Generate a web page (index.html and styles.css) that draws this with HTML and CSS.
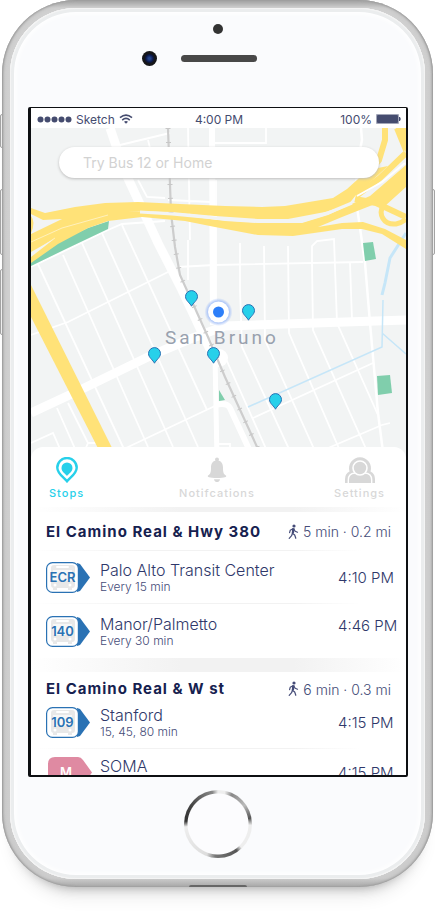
FILE: index.html
```html
<!DOCTYPE html>
<html lang="en">
<head>
<meta charset="utf-8">
<meta name="viewport" content="width=device-width, initial-scale=1">
<title>Stops near San Bruno</title>
<link rel="stylesheet" href="styles.css">
</head>
<body>
<svg class="defs" aria-hidden="true">
  <defs>
    <symbol id="pin" viewBox="0 0 14 17"><path d="M7 16.200C5.600 13.200 1 10.400 1 6.600A6 6 0 0 1 13 6.600C13 10.400 8.400 13.200 7 16.200Z" fill="#27d0ea" stroke="#2a72b4"/></symbol>
    <symbol id="walk" viewBox="0 0 12 16"><circle cx="7" cy="2" r="1.600" fill="currentColor"/><path d="M6.200 5 5.400 9.200 7.700 11 8.800 14.300M5.400 9.200 4.600 11.700 2.200 14.300M6 4.800 3.200 6.300 2.600 8.700M6.800 5 8.200 7.300 10.500 8.200" fill="none" stroke="currentColor" stroke-width="1.200" stroke-linecap="round" stroke-linejoin="round"/><path d="M5.200 4.300 7.600 4.300 7 9.300 4.800 9.300Z" fill="currentColor"/></symbol>
    <symbol id="bus" viewBox="0 0 44 31">
      <path d="M31 1 34 2 44 15.500 34 29 31 30Z" fill="#2a72b4"/>
      <rect x=".6" y=".6" width="31.800" height="29.800" rx="6" fill="#fff" stroke="#2a72b4" stroke-width="1.200"/>
      <rect x="5" y="3" width="24" height="23" rx="3" fill="#e8e8e8"/>
      <rect x="7" y="26" width="4" height="2" fill="#e8e8e8"/><rect x="22" y="26" width="4" height="2" fill="#e8e8e8"/>
      <rect x="10" y="4" width="13" height="2" rx="1" fill="#fff"/><rect x="7" y="8" width="19" height="11" fill="#f7f7f7"/>
      <circle cx="9" cy="23" r="1.500" fill="#fff"/><circle cx="24" cy="23" r="1.500" fill="#fff"/>
    </symbol>
    <radialGradient id="halo"><stop offset=".7" stop-color="#9dbbf8"/><stop offset="1" stop-color="#9dbbf8" stop-opacity="0"/></radialGradient>
  </defs>
</svg>

<i class="key key-mute"></i><i class="key key-up"></i><i class="key key-down"></i><i class="key key-power"></i>

<div class="phone">
  <div class="face">
    <div class="earpiece">
      <span class="sensor"></span>
      <div class="speaker-row"><span class="camera"></span><span class="speaker"></span></div>
    </div>

    <main class="screen">
      <header class="status">
        <div class="carrier">
          <svg width="35" height="7" viewBox="0 0 35 7" fill="#454c6f"><circle cx="3.500" cy="3.500" r="3"/><circle cx="10.500" cy="3.500" r="3"/><circle cx="17.500" cy="3.500" r="3"/><circle cx="24.500" cy="3.500" r="3"/><circle cx="31.500" cy="3.500" r="3"/></svg>
          <span>Sketch</span>
          <svg width="14" height="10" viewBox="0 0 14 10" fill="none" stroke="#454c6f" stroke-width="1.600"><path d="M1 3.700Q7-1.600 13 3.700M3.200 6.100Q7 2.800 10.800 6.100"/><path d="M5 7.700Q7 6.100 9 7.700L7 9.800Z" fill="#454c6f" stroke="none"/></svg>
        </div>
        <span>4:00 PM</span>
        <div class="power">
          <span>100%</span>
          <svg width="25" height="10" viewBox="0 0 25 10"><rect width="23" height="10" rx="1" fill="#a2a6b8"/><rect x="1" y="1" width="21" height="8" rx="1" fill="#454c6f"/><path d="M23.500 3Q25 5 23.500 7Z" fill="#454c6f" stroke="#454c6f"/></svg>
        </div>
      </header>

      <section class="map">
        <svg class="map-art" viewBox="31 128 375 332" preserveAspectRatio="xMidYMid slice" role="img" aria-label="Map of San Bruno">
          <rect x="31" y="128" width="375" height="332" fill="#f2f4f4"/>
          <g fill="none" stroke="#fff" stroke-width="1.800">
            <path d="M37 262 123 447 129 460M63 255 148 447M82 243 173 447M102 233 198 447M122 225 207 410"/>
            <path d="M31 267 108 230 122 224 165 221M172 270 68 322 31 335M128 447 217 405M100 460 128 447"/>
            <path d="M57 408 80 460M68 403 88 443 84 452M31 443 53 433 64 458M88 443H98"/>
            <path d="M188 128 190 240M188 280V240M168 200 212 202M120 145 170 133M148 140 150 148M138 180 147 197 165 198M212 143H266V128M216 180V330"/>
            <path d="M240 243V290L242 347 294 460M264 246 265 340 319 460M288 246 289 333 344 460M312 263 313 330 371 460M312 263V246L317 241 334 239 337 323 378 415M350 263 352 320"/>
            <path d="M178 267 214 265 363 262M253 418 373 363M300 460 382 425 390 423M222 350 271 460M217 444H230V450"/>
            <path d="M361 128 362 140 357 165 356 200 365 263 370 323 378 413 384 460" stroke-width="2.500"/>
            <path d="M212 128 213 325" stroke-width="6"/>
            <path d="M110 128 125 172 158 243 182 290 215 360" stroke-width="9"/>
            <path d="M215 355 217 460" stroke-width="5"/>
            <path d="M31 413 78 391 152 355 190 339 225 326 406 320" stroke-width="9"/>
            <path d="M215 405Q227 402 230 408L254 460" stroke-width="6"/>
          </g>
          <circle cx="219" cy="358" r="9" fill="#fff"/>
          <g fill="#80ceac"><path d="M109 221 108 229 68 248 31 266V261L58 242 88 228Z"/><path d="M363 243 373 242 376 259 365 261Z"/><path d="M377 376 390 375 392 393 378 395Z"/><path d="M219 390 225 400 219 401Z"/></g>
          <g fill="none" stroke="#c6e6f8" stroke-width="1.500"><path d="M248 407 382 347 383 300M382 333 406 354"/><path d="M406 233 390 258 385 283 382 295" stroke-width="3"/></g>
          <path d="M168 128 171 213 175 247 180 275 208 337 225 377 263 460" fill="none" stroke="#cdcdcd" stroke-width="2.200"/>
          <path d="M168 128 171 213 175 247 180 275 208 337 225 377 263 460" fill="none" stroke="#c7c7c7" stroke-width="5" stroke-dasharray="1 13"/>
          <g fill="#ffe278">
            <path d="M31 285V317L104 460H118Z"/>
            <path d="M31 208 45 213 75 207 105 203 138 202 180 204 225 206 262 207 285 206 333 198 347 189 368 170 388 166 356 195 348 205 325 212 288 219 258 219 215 216 172 212 138 211 112 213 124 212 142 211 180 215 225 221 258 223 302 223 328 215 356 202 370 196 406 165V187L385 206 375 204 342 217 318 227 342 223 363 222 385 229 406 240V249L382 234 362 229 342 229 293 236 258 235 215 227 185 221 142 217 108 221 88 228 58 244 31 263V234L62 219 43 220 31 214Z"/>
            <path d="M31 216Q36 222 31 233Z"/>
          </g>
          <g fill="none" stroke="#ffe278" stroke-width="6"><path d="M385 128V140L379 160 366 176"/><path d="M397 128 406 150"/><path d="M356 196 380 178 406 153"/><path d="M355 199 376 203 406 217"/><path d="M384 203C377 215 384 225 396 224Q402 223 406 219" stroke-width="5"/></g>
          <path d="M396 128H406V153Z" fill="#ffe278"/>
          <path d="M31 242 62 228 108 215M31 254 55 238" fill="none" stroke="#fff1bd" stroke-width="1"/>
          <path d="M31 252 54 239 31 257Z" fill="#f2f4f4"/>
          <path d="M140 212 172 214 225 219 258 221 302 221 328 213 352 203" fill="none" stroke="#f2f4f4" stroke-width="3"/>
          <path d="M357 196 382 182 405 163" fill="none" stroke="#fff" stroke-width="2"/>
          <text x="165" y="344" class="place">San Bruno</text>
          <circle cx="218.500" cy="312" r="14" fill="url(#halo)"/><circle cx="218.500" cy="312" r="10.500" fill="#fff"/><circle cx="218.500" cy="312" r="5.500" fill="#2d7ff9"/>
          <use href="#pin" x="184.500" y="290" width="14" height="17"/>
          <use href="#pin" x="241.500" y="304" width="14" height="17"/>
          <use href="#pin" x="147.500" y="347" width="14" height="17"/>
          <use href="#pin" x="206.500" y="347" width="14" height="17"/>
          <use href="#pin" x="268.500" y="393" width="14" height="17"/>
        </svg>
        <input class="search" type="search" aria-label="Search" placeholder="Try Bus 12 or Home">
      </section>

      <section class="sheet">
        <nav class="tabs">
          <a class="tab active" href="#stops">
            <svg width="22" height="26" viewBox="0 0 22 26"><path d="M11 24.300C8 20.500 1.300 16.700 1.300 10.700A9.700 9.700 0 0 1 20.700 10.700C20.700 16.700 14 20.500 11 24.300Z" fill="none" stroke="#27d0ea" stroke-width="2.400"/><path d="M11 19C9 16.500 5.500 14.500 5.500 11A5.500 5.500 0 0 1 16.500 11C16.500 14.500 13 16.500 11 19Z" fill="#27d0ea"/></svg>
            <span>Stops</span>
          </a>
          <a class="tab" href="#notifications">
            <svg width="22" height="26" viewBox="0 0 22 26" fill="#d8d8d8"><circle cx="11" cy="2.500" r="2"/><path d="M11 3.500C15.500 3.500 17 7 17 10.500 17 15.500 17.500 17 20 18.500 21 20 19 21 11 21S1 20 2 18.500C4.500 17 5 15.500 5 10.500 5 7 6.500 3.500 11 3.500Z"/><path d="M8 22.200H14Q13.500 25 11 25T8 22.200Z"/></svg>
            <span>Notifcations</span>
          </a>
          <a class="tab" href="#settings">
            <svg width="30" height="26" viewBox="0 0 30 26"><path d="M0 26V22Q0 16.500 4.500 14.500A11 11 0 1 1 25.500 14.500Q30 16.500 30 22V26Z" fill="#d8d8d8"/><path d="M3.300 27V23Q3.300 16.500 10 16H20Q26.700 16.500 26.700 23V27" fill="#d8d8d8" stroke="#fff" stroke-width="1.400"/><circle cx="15" cy="11" r="7" fill="#d8d8d8" stroke="#fff" stroke-width="1.600"/></svg>
            <span>Settings</span>
          </a>
        </nav>

        <section class="stop">
          <header class="stop-head">
            <h2>El Camino Real &amp; Hwy 380</h2>
            <p><svg width="12" height="16"><use href="#walk"/></svg>5 min · 0.2 mi</p>
          </header>
          <ul>
            <li class="route">
              <span class="badge"><svg width="44" height="31"><use href="#bus"/></svg><b>ECR</b></span>
              <div><h3>Palo Alto Transit Center</h3><p>Every 15 min</p></div>
              <time>4:10 PM</time>
            </li>
            <li class="route">
              <span class="badge"><svg width="44" height="31"><use href="#bus"/></svg><b>140</b></span>
              <div><h3>Manor/Palmetto</h3><p>Every 30 min</p></div>
              <time class="raised">4:46 PM</time>
            </li>
          </ul>
        </section>

        <section class="stop compact">
          <header class="stop-head">
            <h2>El Camino Real &amp; W st</h2>
            <p><svg width="12" height="16"><use href="#walk"/></svg>6 min · 0.3 mi</p>
          </header>
          <ul>
            <li class="route">
              <span class="badge"><svg width="44" height="31"><use href="#bus"/></svg><b>109</b></span>
              <div><h3>Stanford</h3><p>15, 45, 80 min</p></div>
              <time>4:15 PM</time>
            </li>
            <li class="route">
              <span class="badge metro"><svg width="44" height="31" viewBox="0 0 44 31"><path d="M7 0H30Q33 0 35 3L44 15.500 35 28Q33 31 30 31H7Q0 31 0 24V7Q0 0 7 0Z" fill="#df8aa2"/></svg><b>M</b></span>
              <div><h3>SOMA</h3></div>
              <time>4:15 PM</time>
            </li>
          </ul>
        </section>
      </section>
    </main>

    <div class="chin"><button class="home" aria-label="Home"></button></div>
  </div>
  <span class="port"></span>
</div>
</body>
</html>
```

FILE: styles.css
```css
* { box-sizing: border-box; }

body {
  margin: 0;
  position: relative;
  height: 100vh;
  overflow: hidden;
  background: #fff;
  color: #16214f;
  font-family: Inter, "Liberation Sans", sans-serif;
}

h2, h3, p, ul { margin: 0; padding: 0; }
ul { list-style: none; }
svg { display: block; flex: none; }
.defs { position: absolute; width: 0; height: 0; }

/* Device body */
.phone {
  position: relative;
  display: flex;
  height: calc(100vh - 37px);
  margin: 0 2px;
  padding: 8px;
  border-radius: 74px;
  background: linear-gradient(#a0a0a0, #d0d0d0 8px, #cdcdcd 99%, #aaa);
  box-shadow: inset 1px 0 2px #999, inset -1px 0 2px #999, inset 0 0 5px #aaa, 0 14px 12px -14px #999, 0 20px 16px -8px #f0f0f0;
}

.face {
  flex: 1;
  display: flex;
  flex-direction: column;
  min-width: 0;
  padding: 0 17px 0 18px;
  border-radius: 66px;
  background: #fafbfd;
  box-shadow: inset 0 0 0 1px #f4f4f4, inset 0 0 0 4px #ebedee, inset 0 0 5px 6px #fff;
}

.key {
  position: absolute;
  left: 0;
  width: 4px;
  border: 1px solid #999;
  border-radius: 2px;
  background: #eee;
}
.key-mute { top: 114px; height: 34px; }
.key-up { top: 189px; height: 66px; }
.key-down { top: 269px; height: 66px; }
.key-power { top: 189px; right: 0; left: auto; height: 66px; }

.earpiece {
  display: flex;
  flex: none;
  flex-direction: column;
  align-items: center;
  gap: 17px;
  height: 99px;
  padding-top: 16px;
}
.sensor { width: 10px; height: 10px; border-radius: 50%; background: #333; }
.speaker-row { display: flex; align-items: center; gap: 24px; padding-right: 38px; }
.camera { width: 15px; height: 15px; border-radius: 50%; background: radial-gradient(#24448b 10%, #0b1848 35%, #151619 48%); }
.speaker { width: 76px; height: 7px; border-radius: 4px; background: #484848; }

.chin { flex: none; display: flex; justify-content: center; height: 102px; padding-top: 13px; }
.home {
  width: 68px;
  height: 68px;
  border: 0;
  border-radius: 50%;
  background:
    radial-gradient(circle, #fcfcfe 30px, transparent 31px),
    conic-gradient(#eee 12deg, #888 25deg, #bbb 55deg, #555 80deg, #eee 92deg, #eee 135deg, #555 145deg, #777 185deg, #ddd 200deg, #eee 265deg, #333 275deg, #444 305deg, #888 350deg, #eee);
}
.port {
  position: absolute;
  bottom: 0;
  left: 50%;
  width: 58px;
  height: 2px;
  margin-left: -29px;
  border-radius: 2px 2px 0 0;
  background: #666;
}

/* Screen */
.screen {
  flex: 1;
  min-height: 0;
  overflow: hidden;
  border: solid #0d0f12;
  border-width: 1px 2px 2px 3px;
  border-radius: 2px;
  background: #fff;
}

.status {
  display: grid;
  grid-template-columns: 1fr auto 1fr;
  align-items: center;
  height: 20px;
  padding: 2px 5px 0 6px;
  color: #454c6f;
  font-size: 12px;
}
.carrier, .power { display: flex; align-items: center; gap: 4px; }
.power { justify-content: flex-end; }

.map { position: relative; padding: 19px 27px 0 28px; height: 332px; }
.map-art { position: absolute; inset: 0; width: 100%; height: 100%; }
.place { fill: #98a1ae; font: 19px Roboto, sans-serif; letter-spacing: 3px; }
.search {
  position: relative;
  display: block;
  width: 100%;
  height: 31px;
  padding: 0 24px;
  border: 0;
  border-radius: 16px;
  background: #fff;
  box-shadow: 0 1px 3px #bbb;
  font: 14px Inter, sans-serif;
}
.search::placeholder { color: #d2d2d2; }

.sheet {
  position: relative;
  margin-top: -13px;
  border-radius: 12px 12px 0 0;
  background: #fff;
}

.tabs {
  display: grid;
  grid-template-columns: 1fr auto 1fr;
  height: 60px;
  padding: 10px 21px 0 18px;
}
.tab {
  display: flex;
  flex-direction: column;
  align-items: center;
  gap: 2px;
  justify-self: center;
  color: #d8d8d8;
  font-size: 11px;
  font-weight: 500;
  line-height: 16px;
  letter-spacing: 1px;
  text-decoration: none;
}
.tab:first-child { justify-self: start; }
.tab:last-child { justify-self: end; }
.tab.active { color: #27d0ea; }

.stop::before {
  content: "";
  display: block;
  height: 5px;
  background: linear-gradient(90deg, #fff, #f2f2f2 40%, #f2f2f2 70%, #fff);
}
.stop.compact::before { height: 14px; }

.stop-head {
  display: flex;
  align-items: center;
  justify-content: space-between;
  height: 39px;
  padding: 0 15px;
  background: linear-gradient(90deg, #fff, #f2f2f2 30%, #f2f2f2 70%, #fff 88%) bottom / 100% 1px no-repeat;
}
.compact .stop-head { height: 34px; background: none; }
.stop-head h2 { font-size: 15px; font-weight: 700; line-height: 20px; letter-spacing: 1px; }
.stop-head p { display: flex; align-items: center; gap: 4px; color: #454c78; font-size: 14px; font-weight: 300; }

.route {
  display: grid;
  grid-template-columns: 54px 1fr 68px;
  align-items: center;
  height: 53px;
  padding-left: 15px;
  background: linear-gradient(90deg, #fff, #f2f2f2 30%, #f2f2f2 70%, #fff 88%) bottom / 100% 1px no-repeat;
}
.route:last-child { height: 54px; background: none; }
.compact .route:first-child { padding-bottom: 12px; height: 43px; }
.compact .route:last-child { height: 47px; }
.compact .route:last-child div { padding-bottom: 14px; }
.badge { position: relative; width: 44px; }
.badge b {
  position: absolute;
  inset: 0 11px 0 0;
  color: #2a72b4;
  font-size: 13px;
  font-weight: 600;
  line-height: 31px;
  text-align: center;
}
.metro { margin-left: 2px; }
.metro b { right: 8px; color: #fff; }
.route h3 { color: #2f386a; font-size: 16px; font-weight: 300; line-height: 18px; }
.route p { color: #454c78; font-size: 12px; font-weight: 300; line-height: 15px; }
.route time { color: #2f386a; font-size: 15px; font-weight: 300; }
.route .raised { padding-bottom: 12px; }
```
